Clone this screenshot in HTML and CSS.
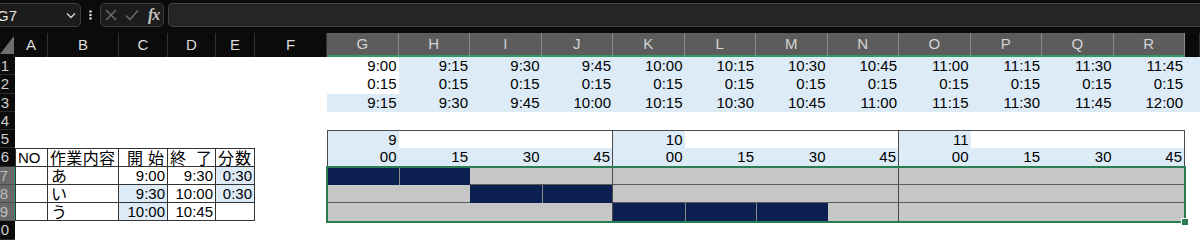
FILE: index.html
```html
<!DOCTYPE html>
<html>

<head>
    <title>作業スケジュール</title>
    <link rel="stylesheet" href="styles.css">
</head>

<body>
    <!-- 数式バー -->
    <div class="bar">
        <div class="namebox">
            <span>G7</span>
            <svg width="10" height="7" viewBox="0 0 10 7"><polyline points="1,1.5 5,5.5 9,1.5" fill="none" stroke="#d8d8d8" stroke-width="1.4"/></svg>
        </div>
        <svg class="dots" width="19" height="24" viewBox="0 0 19 24"><circle cx="9.5" cy="8.5" r="1.3" fill="#d8d8d8"/><circle cx="9.5" cy="12" r="1.3" fill="#d8d8d8"/><circle cx="9.5" cy="15.5" r="1.3" fill="#d8d8d8"/></svg>
        <div class="fxbox">
            <svg class="ico-x" width="12" height="12" viewBox="0 0 12 12"><path d="M1 1L11 11M11 1L1 11" stroke="#727272" stroke-width="1.3"/></svg>
            <svg class="ico-ok" width="14" height="12" viewBox="0 0 14 12"><path d="M1 6.5L5 10.5L13 1.5" fill="none" stroke="#727272" stroke-width="1.3"/></svg>
            <span class="fx">fx</span>
        </div>
        <div class="formula"></div>
    </div>

    <div class="sheet">
        <div class="row hdr">
            <div class="corner"></div>
            <div class="ch">A</div><div class="ch">B</div><div class="ch">C</div><div class="ch">D</div><div class="ch">E</div><div class="ch">F</div>
            <div class="ch on">G</div><div class="ch on">H</div><div class="ch on">I</div><div class="ch on">J</div><div class="ch on">K</div><div class="ch on">L</div>
            <div class="ch on">M</div><div class="ch on">N</div><div class="ch on">O</div><div class="ch on">P</div><div class="ch on">Q</div><div class="ch on">R</div>
            <div class="ch"></div>
        </div>

        <div class="row">
            <div class="rh">1</div>
            <div></div><div></div><div></div><div></div><div></div><div></div>
            <div class="n">9:00</div><div class="n bl">9:15</div><div class="n bl">9:30</div><div class="n bl">9:45</div><div class="n bl">10:00</div><div class="n bl">10:15</div>
            <div class="n bl">10:30</div><div class="n bl">10:45</div><div class="n bl">11:00</div><div class="n bl">11:15</div><div class="n bl">11:30</div><div class="n bl">11:45</div>
            <div class="bl"></div>
        </div>
        <div class="row">
            <div class="rh">2</div>
            <div></div><div></div><div></div><div></div><div></div><div></div>
            <div class="n">0:15</div><div class="n bl">0:15</div><div class="n bl">0:15</div><div class="n bl">0:15</div><div class="n bl">0:15</div><div class="n bl">0:15</div>
            <div class="n bl">0:15</div><div class="n bl">0:15</div><div class="n bl">0:15</div><div class="n bl">0:15</div><div class="n bl">0:15</div><div class="n bl">0:15</div>
            <div class="bl"></div>
        </div>
        <div class="row">
            <div class="rh">3</div>
            <div></div><div></div><div></div><div></div><div></div><div></div>
            <div class="n bl">9:15</div><div class="n bl">9:30</div><div class="n bl">9:45</div><div class="n bl">10:00</div><div class="n bl">10:15</div><div class="n bl">10:30</div>
            <div class="n bl">10:45</div><div class="n bl">11:00</div><div class="n bl">11:15</div><div class="n bl">11:30</div><div class="n bl">11:45</div><div class="n bl">12:00</div>
            <div class="bl"></div>
        </div>
        <div class="row">
            <div class="rh">4</div>
        </div>

        <!-- 時刻見出し -->
        <div class="row">
            <div class="rh">5</div>
            <div></div><div></div><div></div><div></div><div></div><div></div>
            <div class="n bl gh gl">9</div><div class="gh"></div><div class="gh"></div><div class="gh sep"></div>
            <div class="n bl gh">10</div><div class="gh"></div><div class="gh"></div><div class="gh sep"></div>
            <div class="n bl gh">11</div><div class="gh"></div><div class="gh"></div><div class="gh sep"></div>
            <div></div>
        </div>
        <div class="row">
            <div class="rh">6</div>
            <div class="tb tt tl">NO</div>
            <div class="tb tt jp dist">作業内容</div>
            <div class="tb tt jp dist wide">開始</div>
            <div class="tb tt jp dist">終了</div>
            <div class="tb tt jp dist">分数</div>
            <div></div>
            <div class="n bl gl">00</div><div class="n bl">15</div><div class="n bl">30</div><div class="n bl sep">45</div>
            <div class="n bl">00</div><div class="n bl">15</div><div class="n bl">30</div><div class="n bl sep">45</div>
            <div class="n bl">00</div><div class="n bl">15</div><div class="n bl">30</div><div class="n bl sep">45</div>
            <div></div>
        </div>

        <!-- ガント -->
        <div class="row mid">
            <div class="rh on">7</div>
            <div class="tb tl"></div>
            <div class="tb jp txt">あ</div>
            <div class="tb n">9:00</div>
            <div class="tb n">9:30</div>
            <div class="tb n bl">0:30</div>
            <div></div>
            <div class="nv"></div><div class="nv"></div><div class="g"></div><div class="g sep"></div>
            <div class="g"></div><div class="g"></div><div class="g"></div><div class="g sep"></div>
            <div class="g"></div><div class="g"></div><div class="g"></div><div class="g"></div>
            <div></div>
        </div>
        <div class="row mid">
            <div class="rh on">8</div>
            <div class="tb tl"></div>
            <div class="tb jp txt">い</div>
            <div class="tb n bl">9:30</div>
            <div class="tb n">10:00</div>
            <div class="tb n bl">0:30</div>
            <div></div>
            <div class="g"></div><div class="g"></div><div class="nv"></div><div class="nv sep"></div>
            <div class="g"></div><div class="g"></div><div class="g"></div><div class="g sep"></div>
            <div class="g"></div><div class="g"></div><div class="g"></div><div class="g"></div>
            <div></div>
        </div>
        <div class="row">
            <div class="rh on">9</div>
            <div class="tb tl"></div>
            <div class="tb jp txt">う</div>
            <div class="tb n bl">10:00</div>
            <div class="tb n">10:45</div>
            <div class="tb"></div>
            <div></div>
            <div class="g"></div><div class="g"></div><div class="g"></div><div class="g sep"></div>
            <div class="nv"></div><div class="nv"></div><div class="nv"></div><div class="g sep"></div>
            <div class="g"></div><div class="g"></div><div class="g"></div><div class="g"></div>
            <div></div>
        </div>
        <div class="row">
            <div class="rh">10</div>
        </div>

        <div class="sel"></div>
    </div>
</body>

</html>
```

FILE: styles.css
```css
*{
    box-sizing: border-box;
    margin: 0;
    padding: 0;
}
body{
    width: 1200px;
    height: 240px;
    overflow: hidden;
    background: #fff;
    font-family: "Liberation Sans", Arial, sans-serif;
}

/* 数式バー */
.bar{
    height: 33px;
    padding-top: 3px;
    background: #0b0b0b;
    display: flex;
    align-items: flex-start;
}
.namebox{
    margin-left: -12px;
    width: 93px;
    height: 24px;
    border: 1px solid #3e3e3e;
    border-radius: 5px;
    background: #1c1c1c;
    color: #e4e4e4;
    font-size: 15px;
    display: flex;
    align-items: center;
    justify-content: space-between;
    padding: 0 4px 0 8px;
}
.dots{
    display: block;
}
.fxbox{
    width: 64px;
    height: 24px;
    border: 1px solid #3e3e3e;
    border-radius: 5px;
    background: #1c1c1c;
    display: flex;
    align-items: center;
    padding-left: 4px;
}
.ico-ok{
    margin-left: 8px;
}
.fx{
    margin-left: 9px;
    color: #c4c4c4;
    font-family: "Liberation Serif", serif;
    font-style: italic;
    font-weight: bold;
    font-size: 16px;
    letter-spacing: -1px;
}
.formula{
    flex: 1;
    margin-left: 4px;
    height: 24px;
    border: 1px solid #444;
    border-right: none;
    border-radius: 5px 0 0 5px;
    background: #252525;
}

/* シート */
.sheet{
    position: relative;
}
.row{
    display: grid;
    grid-template-columns: 15px 33px 71px 49px 48px 39px 72px repeat(12, 71.5px) 15px;
    height: 18.25px;
}
.row > div{
    font-size: 15px;
    line-height: 18px;
    padding: 0 2px;
    white-space: nowrap;
    overflow: hidden;
    color: #000;
}
.hdr{
    height: 24px;
    background: #0b0b0b;
}
.row > .corner{
    display: flex;
    align-items: center;
    padding: 0;
}
.corner::after{
    content: "";
    display: block;
    width: 14px;
    height: 18px;
    background: #6e6e6e;
    clip-path: polygon(100% 0, 100% 100%, 0 100%);
}
.row > .ch{
    color: #dcdcdc;
    text-align: center;
    line-height: 24px;
    border-right: 1px solid #333;
}
.row > .ch.on{
    background: #5c5c5c;
    color: #d4d4d4;
    line-height: 22px;
    border-right-color: #8a8a8a;
    border-bottom: 2px solid #2f9a63;
}
.row > .rh{
    grid-column: 1;
    background: #0b0b0b;
    color: #cfcfcf;
    direction: rtl;
    padding: 0 6px 0 0;
    border-bottom: 1px solid #2c2c2c;
}
.row > .rh.on{
    background: #686868;
    color: #bdbdbd;
    border-right: 1px solid #2f9a63;
    border-bottom-color: #4c4c4c;
}

.n{
    text-align: right;
}
.bl{
    background: #ddebf7;
}

/* 作業表 */
.tb{
    border-right: 1px solid #333;
    border-bottom: 1px solid #333;
}
.tt{
    border-top: 1px solid #333;
}
.tl{
    border-left: 1px solid #333;
}
.row > .jp{
    font-family: "Noto Sans CJK JP", sans-serif;
    font-size: 16px;
    line-height: 17px;
    overflow: visible;
}
.row > .dist{
    text-align: justify;
    text-align-last: justify;
    padding: 0 3px 0 2px;
}
.row > .dist.wide{
    padding-left: 8px;
}
.row > .txt{
    padding-left: 3px;
}

/* ガント */
.gh{
    border-top: 1px solid #4a4a4a;
}
.gl{
    border-left: 1px solid #4a4a4a;
}
.g{
    background: #c6c6c6;
}
.nv{
    background: #0c1f51;
}
.nv + .nv{
    border-left: 1px solid #8a8a8a;
}
.mid .g{
    border-bottom: 1px solid #5c5c5c;
}
.row > .sep{
    border-right: 1px solid #4a4a4a;
}
.sel{
    position: absolute;
    left: 326px;
    top: 133px;
    width: 860px;
    height: 57px;
    border: 2px solid #2a7d50;
}
.sel::after{
    content: "";
    position: absolute;
    right: -5px;
    bottom: -5px;
    width: 6px;
    height: 6px;
    background: #2a7d50;
    border: 1px solid #fff;
}
```
